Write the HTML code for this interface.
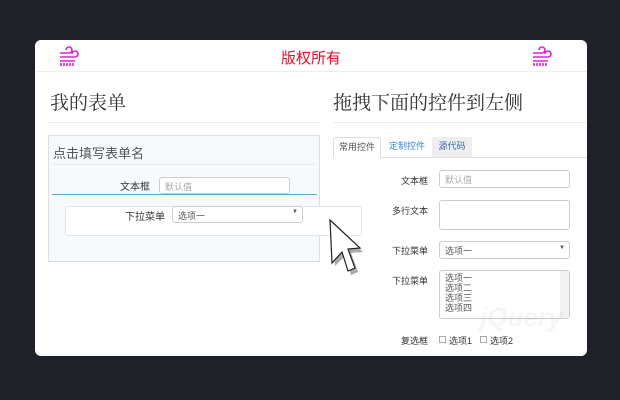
<!DOCTYPE html>
<html><head><meta charset="utf-8"><style>
*{box-sizing:border-box;margin:0;padding:0}
body{width:620px;height:400px;background:#1f2129;font-family:"Liberation Sans","Noto Sans CJK SC",sans-serif;position:relative;overflow:hidden}
.panel{position:absolute;left:35px;top:40px;width:552px;height:316px;background:#fff;border-radius:6px;overflow:hidden}
.a{position:absolute}
.t{font-size:10px;color:#333;white-space:nowrap}
.inp{position:absolute;border:1px solid #ccc;border-radius:3px;background:#fff;font-size:9px;color:#555;padding:2px 5px;white-space:nowrap}
.h{font-family:"Noto Serif CJK SC","Liberation Serif",serif;font-size:19px;color:#333}
</style></head><body>
<div class="panel">
 <div class="a" style="left:0;top:31px;width:552px;height:1px;background:#eee"></div>
 <div class="a" style="left:0;width:552px;top:7px;text-align:center;font-size:15px;color:#e0102a">版权所有</div>
 <svg class="a" style="left:21px;top:6px" width="26" height="22" viewBox="0 0 26 22" fill="none" stroke="#e020d0" stroke-width="1.6"><path d="M4 7h9a3 3 0 1 0-3-3M4 11h15a3 3 0 1 0-3-3M4 15h15M5 17v3M8 17v3M11 17v3M14 17v3M17 17v3"/></svg>
 <svg class="a" style="left:494px;top:6px" width="26" height="22" viewBox="0 0 26 22" fill="none" stroke="#e020d0" stroke-width="1.6"><path d="M4 7h9a3 3 0 1 0-3-3M4 11h15a3 3 0 1 0-3-3M4 15h15M5 17v3M8 17v3M11 17v3M14 17v3M17 17v3"/></svg>

 <div class="a h" style="left:15px;top:48px">我的表单</div>
 <div class="a" style="left:13px;top:82px;width:272px;height:1px;background:#eee"></div>
 <div class="a" style="left:13px;top:95px;width:272px;height:127px;background:#f6fafc;border:1px solid #ddd"></div>
 <div class="a" style="left:18px;top:103px;font-size:13px;color:#555">点击填写表单名</div>
 <div class="a" style="left:18px;top:124px;width:262px;height:1px;background:#e6e6e6"></div>
 <div class="a t" style="left:85px;top:138px">文本框</div>
 <div class="inp" style="left:124px;top:137px;width:131px;height:17px;color:#aaa">默认值</div>
 <div class="a" style="left:17px;top:154px;width:265px;height:1px;background:#5aa8d8"></div>
 <div class="a" style="left:30px;top:166px;width:297px;height:30px;background:#fff;border:1px solid #e4e4e4;border-radius:3px"></div>
 <div class="a t" style="left:90px;top:168px">下拉菜单</div>
 <div class="inp" style="left:137px;top:166px;width:131px;height:17px">选项一<span style="position:absolute;right:4px;top:2px;font-size:6px">▼</span></div>

 <div class="a h" style="left:298px;top:48px">拖拽下面的控件到左侧</div>
 <div class="a" style="left:298px;top:82px;width:254px;height:1px;background:#eee"></div>
 <div class="a" style="left:298px;top:117px;width:254px;height:1px;background:#ddd"></div>
 <div class="a" style="left:298px;top:97px;width:48px;height:21px;background:#fff;border:1px solid #ddd;border-bottom-color:#fff;border-radius:3px 3px 0 0;font-size:9px;color:#555;text-align:center;line-height:19px">常用控件</div>
 <div class="a" style="left:348px;top:97px;width:48px;height:20px;font-size:9px;color:#3a8ad0;text-align:center;line-height:19px">定制控件</div>
 <div class="a" style="left:397px;top:97px;width:40px;height:20px;background:#eee;font-size:9px;color:#3a6ab0;text-align:center;line-height:19px">源代码</div>
 <div class="a t" style="left:366px;top:134px;font-size:9px">文本框</div>
 <div class="inp" style="left:404px;top:130px;width:131px;height:18px;color:#aaa">默认值</div>
 <div class="a t" style="left:357px;top:164px;font-size:9px">多行文本</div>
 <div class="inp" style="left:404px;top:160px;width:131px;height:30px"></div>
 <div class="a t" style="left:357px;top:204px;font-size:9px">下拉菜单</div>
 <div class="inp" style="left:404px;top:201px;width:131px;height:18px">选项一<span style="position:absolute;right:4px;top:3px;font-size:6px">▼</span></div>
 <div class="a t" style="left:357px;top:234px;font-size:9px">下拉菜单</div>
 <div class="inp" style="left:404px;top:230px;width:131px;height:49px;line-height:10px;font-size:9px">选项一<br>选项二<br>选项三<br>选项四</div>
 <div class="a" style="left:525px;top:231px;width:9px;height:47px;background:#f1f1f1"></div>
 <div class="a t" style="left:366px;top:294px;font-size:9px">复选框</div>
 <div class="a" style="left:404px;top:296px;width:7px;height:7px;border:1px solid #aaa"></div>
 <div class="a t" style="left:414px;top:294px;font-size:9px">选项1</div>
 <div class="a" style="left:445px;top:296px;width:7px;height:7px;border:1px solid #aaa"></div>
 <div class="a t" style="left:455px;top:294px;font-size:9px">选项2</div>
 <div class="a" style="left:445px;top:262px;font-size:26px;font-weight:bold;font-style:italic;color:rgba(0,0,0,0.04)">jQuery</div>
</div>
<svg class="a" style="left:0;top:0;position:absolute" width="620" height="400"><polygon points="332,222 334,264 344,254 350,273 357,270 350,251 362,250" fill="#aaa" transform="translate(1,2)"/><polygon points="330,220 332,263 342,252 348,271 355,268 348,249 360,248" fill="#fff" stroke="#222" stroke-width="1.2"/></svg>
</body></html>
